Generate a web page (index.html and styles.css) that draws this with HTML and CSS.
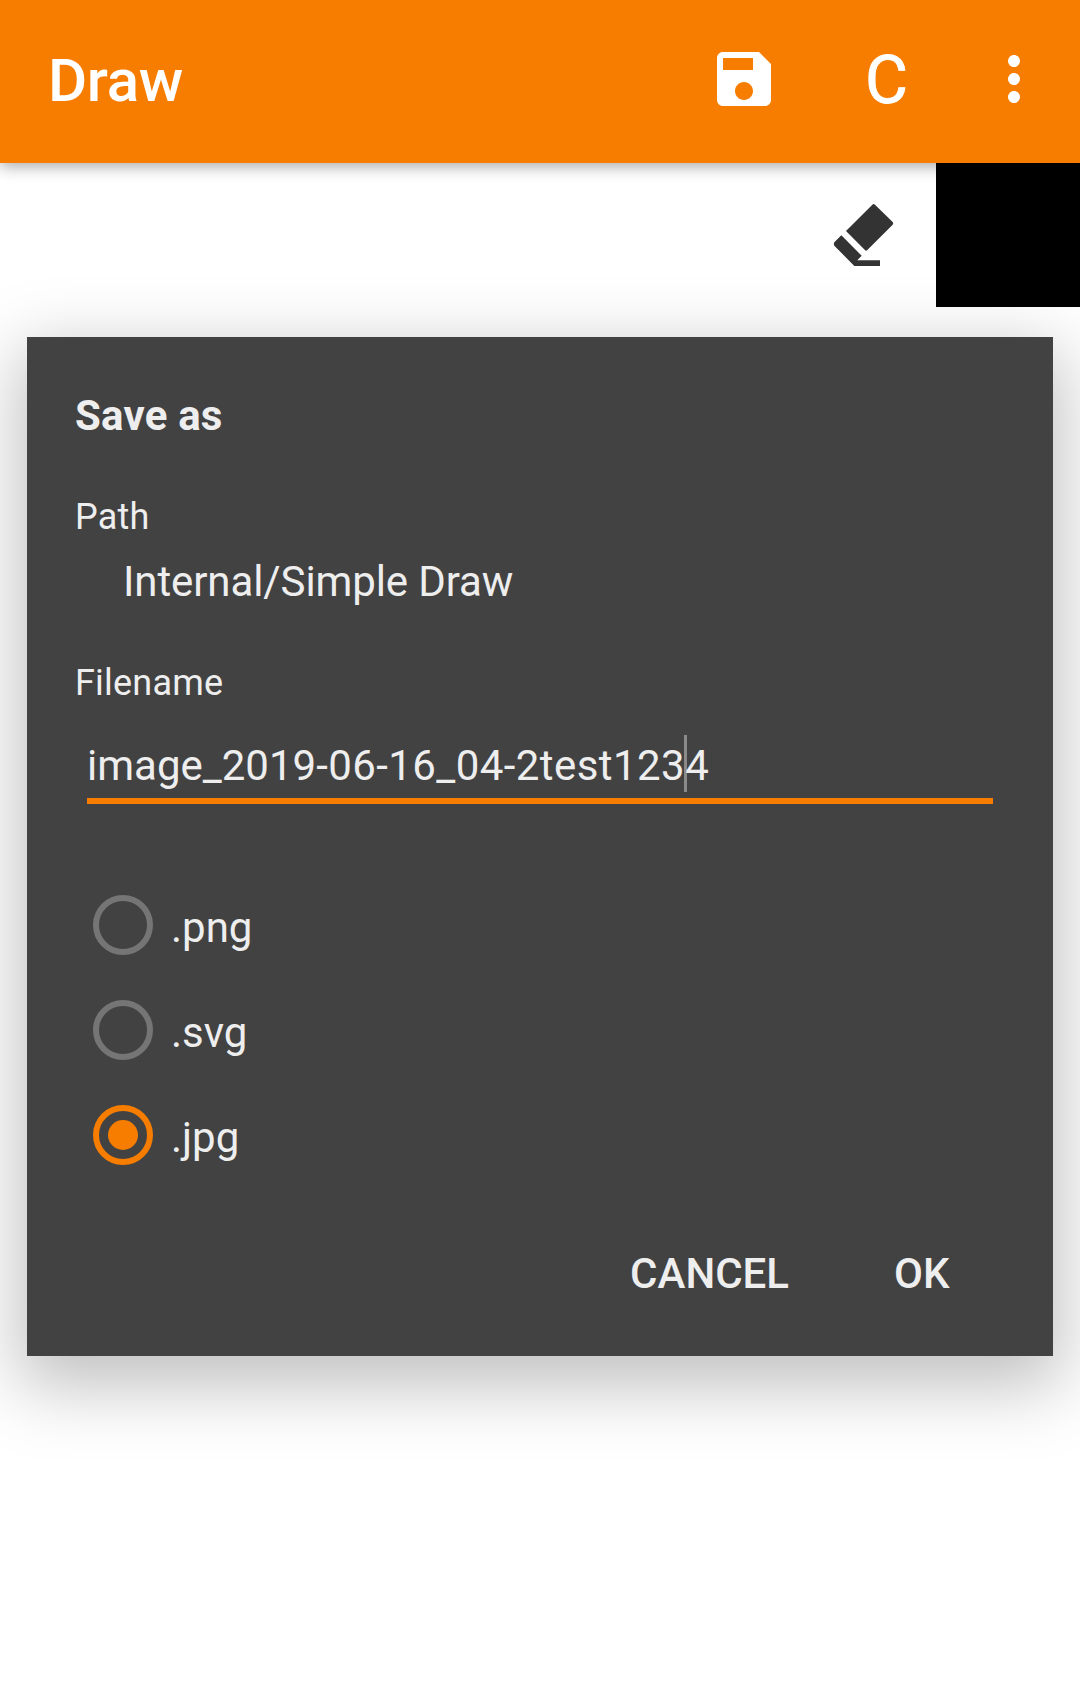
FILE: index.html
```html
<!DOCTYPE html>
<html lang="en">
<head>
<meta charset="utf-8">
<title>Draw</title>
<link rel="stylesheet" href="styles.css">
</head>
<body>
<header class="app-bar">
  <h1 class="app-title">Draw</h1>
  <nav class="actions">
    <svg class="icon" viewBox="0 0 24 24"><path fill="#fff" d="M17 3H5c-1.11 0-2 .9-2 2v14c0 1.1.89 2 2 2h14c1.1 0 2-.9 2-2V7l-4-4zm-5 16c-1.66 0-3-1.34-3-3s1.34-3 3-3 3 1.34 3 3-1.34 3-3 3zm3-10H5V5h10v4z"/></svg>
    <span class="letter">C</span>
    <svg class="icon" viewBox="0 0 24 24"><path fill="#fff" d="M12 8c1.1 0 2-.9 2-2s-.9-2-2-2-2 .9-2 2 .9 2 2 2zm0 2c-1.1 0-2 .9-2 2s.9 2 2 2 2-.9 2-2-.9-2-2-2zm0 6c-1.1 0-2 .9-2 2s.9 2 2 2 2-.9 2-2-.9-2-2-2z"/></svg>
  </nav>
</header>
<div class="tools">
  <svg class="eraser" viewBox="96 156 192 195"><path fill="#333" d="M217 164Q221 160 225 164L278 216Q281 220 278 224L202 300Q198 305 194 299L138 243ZM124 256L185 317L172 331H240V348H163L103 287Q100 282 103 277Z"/></svg>
  <div class="swatch"></div>
</div>
<main class="dialog">
  <h2 class="dialog-title">Save as</h2>
  <div class="label">Path</div>
  <div class="path">Internal/Simple Draw</div>
  <div class="label">Filename</div>
  <div class="field">image_2019<span class="suffix">-06-16_04-2test123<span class="caret"></span>4</span></div>
  <div class="options">
    <div class="option"><span class="radio"></span><span class="option-text">.png</span></div>
    <div class="option"><span class="radio"></span><span class="option-text">.svg</span></div>
    <div class="option"><span class="radio checked"></span><span class="option-text">.jpg</span></div>
  </div>
  <div class="buttons"><span>CANCEL</span><span>OK</span></div>
</main>
</body>
</html>
```
FILE: styles.css
```css
* { box-sizing: border-box; }
body {
  margin: 0;
  height: 1699px;
  overflow: hidden;
  background: #fff;
  color: #eee;
  font: 42px/49px Roboto, sans-serif;
}
.app-bar {
  display: flex;
  justify-content: space-between;
  height: 163px;
  padding: 43px 30px 0 48px;
  background: #f77d00;
  color: #fff;
  box-shadow: 0 4px 14px rgba(0, 0, 0, .32);
}
.app-title {
  margin: 2px 0 0;
  font-size: 60px;
  line-height: 71px;
  font-weight: 500;
  letter-spacing: -.3px;
}
.actions { display: flex; }
.icon { width: 72px; height: 72px; }
.letter {
  width: 198px;
  padding-left: 15px;
  text-align: center;
  font-size: 66px;
  line-height: 75px;
  font-weight: 400;
  -webkit-text-stroke: .8px #fff;
}
.tools { display: flex; justify-content: flex-end; height: 144px; }
.eraser { width: 64px; height: 65px; margin: 39px 40px 0 0; }
.swatch { position: relative; width: 144px; height: 144px; background: #000; }
.dialog {
  height: 1019px;
  margin: 30px 27px 0;
  padding: 54px 48px 0;
  background: #424242;
  box-shadow: 0 22px 66px 8px rgba(0, 0, 0, .25);
}
.dialog-title { margin: 0 0 56px; font-size: 42px; font-weight: 700; letter-spacing: .2px; }
.label { font-size: 36px; line-height: 42px; letter-spacing: .2px; }
.path { margin: 19px 0 56px 48px; letter-spacing: -.1px; }
.field {
  margin: 37px 12px 0;
  height: 63px;
  border-bottom: 6px solid #f77d00;
}
.suffix { letter-spacing: .43px; }
.caret {
  display: inline-block;
  width: 3px;
  height: 57px;
  margin: -8px -2px -12px -1px;
  background: #8a8a8a;
}
.options { display: flex; flex-direction: column; gap: 45px; margin: 91px 0 84px 18px; }
.option { display: flex; gap: 18px; height: 60px; }
.option-text { margin-top: 8px; }
.radio { width: 60px; height: 60px; border: 6px solid #757575; border-radius: 50%; }
.radio.checked {
  display: grid;
  place-items: center;
  border-color: #f77d00;
}
.radio.checked::after { content: ""; width: 30px; height: 30px; border-radius: 50%; background: #f77d00; }
.buttons { display: flex; justify-content: flex-end; gap: 105px; padding-right: 55.5px; font-weight: 500; }
```
